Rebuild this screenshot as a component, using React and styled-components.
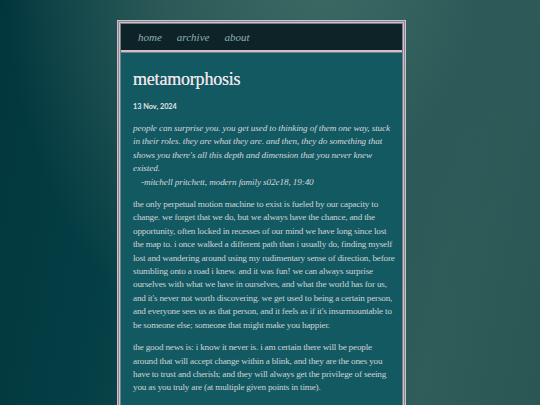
import styled, { createGlobalStyle } from 'styled-components'

const Global = createGlobalStyle`
  html, body { margin: 0; padding: 0; }
  body {
    width: 540px;
    height: 405px;
    overflow: hidden;
    background: radial-gradient(ellipse at 60% -10%, #3d6a64 0%, #2d5a58 35%, transparent 70%),
      linear-gradient(100deg, #02363d 0%, #043f45 25%, #1f5254 55%, #2f5d59 80%, #2a5654 100%);
    font-family: "Liberation Serif", "DejaVu Serif", serif;
  }
`

const Frame = styled.div`
  width: 281px;
  margin: 22px 0 0 119px;
  border: 1px solid #d9bccb;
  padding: 1px;
  background: #6f8088;
  box-shadow: 0 0 0 1px #7d8e92, 0 0 0 2px #d9bccb;
`

const Nav = styled.nav`
  display: flex;
  gap: 15px;
  align-items: center;
  height: 26px;
  padding: 0 17px;
  background: #0d2327;
  border-bottom: 2px solid #d9bccb;
`

const NavLink = styled.a`
  font-style: italic;
  font-size: 11px;
  color: #8fb1b2;
  text-decoration: none;
`

const Content = styled.main`
  background: #135962;
  padding: 12px 5px 20px 12px;
  height: 360px;
  margin-top: 1px;
`

const Title = styled.h1`
  margin: 0 0 9px;
  font-size: 18px;
  font-weight: 400;
  color: #ebe3ea;
  line-height: 28px;
  letter-spacing: -0.2px;
  text-shadow: 0 0 0.4px #ebe3ea;
`

const Date = styled.div`
  font-family: Lato, "Open Sans", sans-serif;
  font-size: 7.3px;
  font-weight: 700;
  color: #e4e2e6;
  margin-bottom: 11px;
`

const Quote = styled.blockquote`
  margin: 0 0 9px;
  font-style: italic;
  font-size: 9.2px;
  letter-spacing: -0.12px;
  line-height: 13.4px;
  color: #d3d6dc;
`

const Cite = styled.div`
  padding-left: 8px;
`

const Para = styled.p`
  margin: 0 0 9px;
  font-size: 9.2px;
  letter-spacing: -0.2px;
  line-height: 13.4px;
  color: #cdd3d6;
`

export default function App() {
  return (
    <>
      <Global />
      <Frame>
        <Nav>
          <NavLink href="#">home</NavLink>
          <NavLink href="#">archive</NavLink>
          <NavLink href="#">about</NavLink>
        </Nav>
        <Content>
          <Title>metamorphosis</Title>
          <Date>13 Nov, 2024</Date>
          <Quote>
            people can surprise you. you get used to thinking of them one way, stuck in their roles. they are what they are. and then, they do something that shows you there's all this depth and dimension that you never knew existed.
            <Cite>-mitchell pritchett, modern family s02e18, 19:40</Cite>
          </Quote>
          <Para>
            the only perpetual motion machine to exist is fueled by our capacity to change. we forget that we do, but we always have the chance, and the opportunity, often locked in recesses of our mind we have long since lost the map to. i once walked a different path than i usually do, finding myself lost and wandering around using my rudimentary sense of direction, before stumbling onto a road i knew. and it was fun! we can always surprise ourselves with what we have in ourselves, and what the world has for us, and it's never not worth discovering. we get used to being a certain person, and everyone sees us as that person, and it feels as if it's insurmountable to be someone else; someone that might make you happier.
          </Para>
          <Para>
            the good news is: i know it never is. i am certain there will be people around that will accept change within a blink, and they are the ones you have to trust and cherish; and they will always get the privilege of seeing you as you truly are (at multiple given points in time).
          </Para>
          <Para>
            so go and kiss someone, break that spell, reach what you always wanted.
          </Para>
        </Content>
      </Frame>
    </>
  )
}
